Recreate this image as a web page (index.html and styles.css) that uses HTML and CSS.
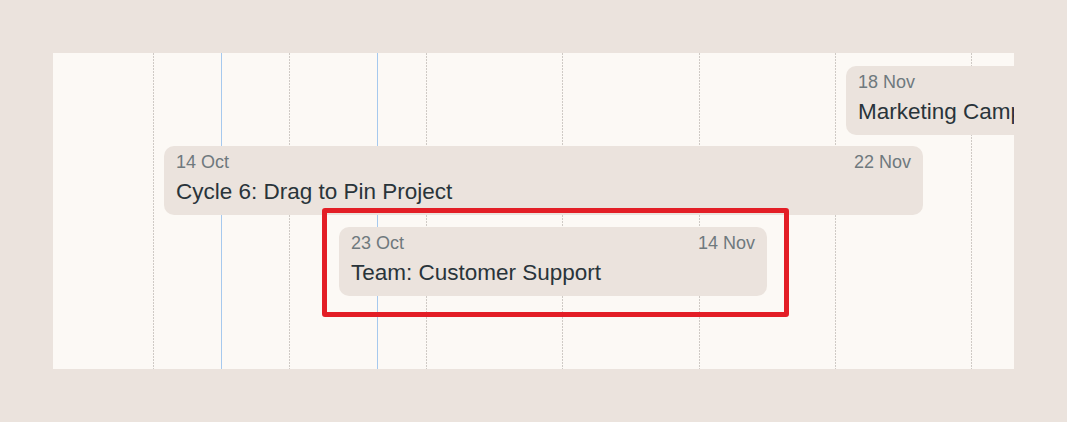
FILE: index.html
```html
<!DOCTYPE html>
<html lang="en">
<head>
<meta charset="utf-8">
<title>Timeline</title>
<link rel="stylesheet" href="styles.css">
</head>
<body>
<div class="page">
  <div class="canvas">
    <div class="gridline dotted" style="left:100px"></div>
    <div class="gridline dotted" style="left:236px"></div>
    <div class="gridline dotted" style="left:373px"></div>
    <div class="gridline dotted" style="left:509px"></div>
    <div class="gridline dotted" style="left:646px"></div>
    <div class="gridline dotted" style="left:782px"></div>
    <div class="gridline dotted" style="left:918px"></div>
    <div class="gridline marker" style="left:168px"></div>
    <div class="gridline marker" style="left:324px"></div>

    <div class="card" style="left:793px; top:13px; width:320px;">
      <div class="dates"><span>18 Nov</span></div>
      <div class="title">Marketing Campaign</div>
    </div>
    <div class="card" style="left:111px; top:93px; width:759px;">
      <div class="dates"><span>14 Oct</span><span>22 Nov</span></div>
      <div class="title">Cycle 6: Drag to Pin Project</div>
    </div>
    <div class="card" style="left:286px; top:174px; width:428px;">
      <div class="dates"><span>23 Oct</span><span>14 Nov</span></div>
      <div class="title">Team: Customer Support</div>
    </div>
  </div>
  <div class="highlight"></div>
</div>
</body>
</html>
```

FILE: styles.css
```css
html, body {
  margin: 0;
  padding: 0;
  background: #ebe3dd;
  font-family: "Liberation Sans", Arial, sans-serif;
}

.page {
  position: relative;
  width: 1067px;
  height: 422px;
  padding: 53px 0 0 53px;
  box-sizing: border-box;
}

.canvas {
  position: relative;
  width: 961px;
  height: 316px;
  background: #fcf9f5;
  overflow: hidden;
}

.gridline {
  position: absolute;
  top: 0;
  bottom: 0;
  width: 1px;
}

.gridline.dotted {
  background: repeating-linear-gradient(to bottom, #cfcac5 0, #cfcac5 2px, transparent 2px, transparent 3px);
}

.gridline.marker {
  background: #a6c9ee;
}

.card {
  position: absolute;
  box-sizing: border-box;
  height: 69px;
  padding: 6px 12px 10px 12px;
  background: #ebe3dd;
  border-radius: 10px;
  display: flex;
  flex-direction: column;
  gap: 7px;
}

.dates {
  display: flex;
  justify-content: space-between;
  font-size: 18px;
  line-height: 20px;
  color: #6f797d;
}

.title {
  font-size: 22.5px;
  line-height: 26px;
  color: #29343a;
  white-space: nowrap;
}

.highlight {
  position: absolute;
  left: 322px;
  top: 208px;
  width: 467px;
  height: 109px;
  box-sizing: border-box;
  border: 5px solid #e31e26;
  border-radius: 3px;
}
```
